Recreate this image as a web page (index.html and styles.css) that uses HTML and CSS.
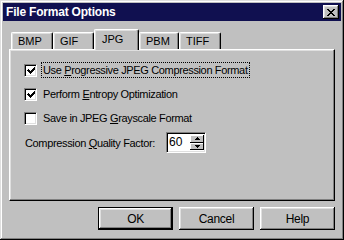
FILE: index.html
```html
<!DOCTYPE html>
<html>
<head>
    <title>File Format Options</title>
    <link rel="stylesheet" href="styles.css">
</head>
<body>
    <div class="window">
        <div class="titlebar">
            <span class="title">File Format Options</span>
            <span class="close">
                <svg width="8" height="7" viewBox="0 0 8 7" shape-rendering="crispEdges">
                    <path d="M0 0h2v1h1v1h2v-1h1v-1h2v1h-1v1h-1v1h-1v1h1v1h1v1h1v1h-2v-1h-1v-1h-2v1h-1v1h-2v-1h1v-1h1v-1h1v-1h-1v-1h-1v-1h-1z" fill="#000"/>
                </svg>
            </span>
        </div>

        <div class="content">
            <!-- tabs -->
            <div class="tabs">
                <div class="tab tab-bmp">BMP</div>
                <div class="tab tab-gif">GIF</div>
                <div class="tab tab-jpg active">JPG</div>
                <div class="tab tab-pbm">PBM</div>
                <div class="tab tab-tiff">TIFF</div>
            </div>

            <div class="panel">
                <div class="check">
                    <span class="box">
                        <svg width="9" height="9" viewBox="0 0 9 9" shape-rendering="crispEdges"><path d="M1 3h1v1h1v1h1v-1h1v-1h1v-1h1v-1h1v3h-1v1h-1v1h-1v1h-1v1h-1v-1h-1v-1h-1v-1h-1z" fill="#000"/></svg>
                    </span>
                    <span class="label focus">Use <u>P</u>rogressive JPEG Compression Format</span>
                </div>
                <div class="check">
                    <span class="box">
                        <svg width="9" height="9" viewBox="0 0 9 9" shape-rendering="crispEdges"><path d="M1 3h1v1h1v1h1v-1h1v-1h1v-1h1v-1h1v3h-1v1h-1v1h-1v1h-1v1h-1v-1h-1v-1h-1v-1h-1z" fill="#000"/></svg>
                    </span>
                    <span class="label">Perform <u>E</u>ntropy Optimization</span>
                </div>
                <div class="check">
                    <span class="box"></span>
                    <span class="label">Save in JPEG <u>G</u>rayscale Format</span>
                </div>
                <div class="quality">
                    <span class="quality-label">Compression <u>Q</u>uality Factor:</span>
                    <div class="spin">
                        <span class="spin-value">60</span>
                        <div class="spin-buttons">
                            <span class="spin-btn">
                                <svg width="5" height="3" viewBox="0 0 5 3" shape-rendering="crispEdges"><path d="M2 0h1v1h1v1h1v1h-5v-1h1v-1h1z" fill="#000"/></svg>
                            </span>
                            <span class="spin-btn">
                                <svg width="5" height="3" viewBox="0 0 5 3" shape-rendering="crispEdges"><path d="M0 0h5v1h-1v1h-1v1h-1v-1h-1v-1h-1z" fill="#000"/></svg>
                            </span>
                        </div>
                    </div>
                </div>
            </div>

            <div class="actions">
                <button class="btn default">OK</button>
                <button class="btn">Cancel</button>
                <button class="btn">Help</button>
            </div>
        </div>
    </div>
</body>
</html>
```

FILE: styles.css
```css
:root {
    --face: #c0c0c0;
    --shadow: #808080;
    --light: #dfdfdf;
    --navy: #101050;
}
body {
    margin: 0;
    font-family: 'Liberation Sans', Arial, sans-serif;
    font-size: 11px;
    letter-spacing: -0.35px;
    color: #000;
}
.window {
    width: 344px;
    height: 240px;
    box-sizing: border-box;
    background: var(--face);
    padding: 3px;
    display: flex;
    flex-direction: column;
    box-shadow: inset -1px -1px #000, inset 1px 1px var(--light),
                inset -2px -2px var(--shadow), inset 2px 2px #fff;
}
.titlebar {
    height: 18px;
    background: var(--navy);
    color: #fff;
    display: flex;
    align-items: center;
    justify-content: space-between;
    padding: 0 2px 0 3px;
}
.title {
    font-weight: bold;
    font-size: 12px;
    letter-spacing: -0.2px;
}
.close {
    width: 16px;
    height: 14px;
    box-sizing: border-box;
    background: var(--face);
    display: flex;
    align-items: center;
    justify-content: center;
    box-shadow: inset -1px -1px #000, inset 1px 1px #fff,
                inset -2px -2px var(--shadow), inset 2px 2px var(--light);
}
.content {
    flex: 1;
    display: flex;
    flex-direction: column;
    padding: 8px 6px 0 6px;
}
.tabs {
    display: flex;
    align-items: flex-end;
    height: 20px;
    padding-left: 2px;
    position: relative;
    z-index: 1;
}
.tab {
    height: 17px;
    box-sizing: border-box;
    padding: 2px 0 0 6px;
    border-top: 1px solid #fff;
    border-left: 1px solid #fff;
    border-right: 1px solid #000;
    border-radius: 2px 2px 0 0;
    box-shadow: inset -1px 0 var(--shadow), inset 1px 1px var(--light);
    background: var(--face);
    letter-spacing: 0;
}
.tab-bmp { width: 42px; }
.tab-gif { width: 41px; }
.tab-jpg { width: 45px; }
.tab-pbm { width: 40px; }
.tab-tiff { width: 42px; }
.tab.active {
    height: 21px;
    margin-bottom: -1px;
    padding-top: 3px;
    padding-left: 7px;
}
.panel {
    height: 152px;
    box-sizing: border-box;
    border: 1px solid;
    border-color: #fff #000 #000 #fff;
    box-shadow: inset -1px -1px var(--shadow), inset 1px 1px var(--light);
    padding: 12px 10px 0 14px;
    display: flex;
    flex-direction: column;
    gap: 8px;
}
.check {
    display: flex;
    align-items: center;
    height: 16px;
}
.box {
    width: 13px;
    height: 13px;
    box-sizing: border-box;
    background: #fff;
    border: 1px solid;
    border-color: var(--shadow) #fff #fff var(--shadow);
    box-shadow: inset 1px 1px #000, inset -1px -1px var(--light);
    display: flex;
    align-items: center;
    justify-content: center;
    margin-right: 4px;
}
.box svg { margin: 1px 0 0 1px; }
.label {
    padding: 1px 1px 1px 1px;
    border: 1px solid transparent;
    line-height: 12px;
}
.label.focus {
    border: 1px dotted #000;
}
.quality {
    display: flex;
    align-items: center;
    margin-top: -2px;
}
.quality-label {
    width: 141px;
    padding-left: 1px;
}
.spin {
    width: 40px;
    height: 21px;
    box-sizing: border-box;
    background: #fff;
    border: 1px solid;
    border-color: var(--shadow) #fff #fff var(--shadow);
    box-shadow: inset 1px 1px #000, inset -1px -1px var(--light);
    display: flex;
    padding: 2px 1px 2px 2px;
}
.spin-value {
    flex: 1;
    font-size: 12px;
    line-height: 15px;
    letter-spacing: 0;
}
.spin-buttons {
    width: 14px;
    display: flex;
    flex-direction: column;
}
.spin-btn {
    flex: 1;
    background: var(--face);
    display: flex;
    align-items: center;
    justify-content: center;
    box-shadow: inset -1px -1px #000, inset 1px 1px #fff;
}
.actions {
    display: flex;
    justify-content: flex-end;
    gap: 6px;
    margin-top: 6px;
}
.btn {
    width: 75px;
    height: 23px;
    box-sizing: border-box;
    background: var(--face);
    border: none;
    font-family: inherit;
    font-size: 12px;
    letter-spacing: -0.3px;
    color: #000;
    padding: 0;
    box-shadow: inset -1px -1px #000, inset 1px 1px #fff,
                inset -2px -2px var(--shadow), inset 2px 2px var(--light);
}
.btn.default {
    border: 1px solid #000;
}
```
